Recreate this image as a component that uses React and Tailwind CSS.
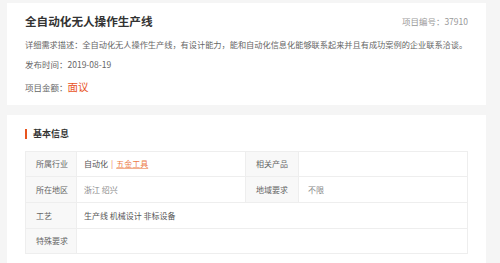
export default function App() {
  const font = { fontFamily: '"Noto Sans CJK SC", "Noto Sans", sans-serif' };
  const label = "pl-[10px] bg-[#f8f8f8] text-[#666] border-r border-[#eeeeee] flex items-center";
  const value = "pl-[7px] flex items-center";
  return (
    <div className="w-[500px] h-[263px] overflow-hidden bg-[#f5f5f5] pt-[3px] pl-[7px]" style={font}>
      <div className="w-[479px] bg-white pt-[8px] pb-[8px] pl-[18px] pr-[18px]">
        <div className="flex items-center justify-between h-[20px]">
          <div className="text-[11.6px] font-bold text-[#333] leading-[20px]">全自动化无人操作生产线</div>
          <div className="text-[8.5px] text-[#999] leading-[20px]">项目编号：37910</div>
        </div>
        <div className="mt-[5px] text-[8.2px] leading-[16px] text-[#666] whitespace-nowrap">
          详细需求描述：全自动化无人操作生产线，有设计能力，能和自动化信息化能够联系起来并且有成功案例的企业联系洽谈。
        </div>
        <div className="mt-[4px] text-[8.5px] leading-[16px] text-[#666]">发布时间：2019-08-19</div>
        <div className="mt-[5px] flex items-center h-[20px] text-[8.5px] text-[#666]">
          <span>项目金额：</span>
          <span className="text-[10.5px] text-[#e8541e]">面议</span>
        </div>
      </div>
      <div className="mt-[10px] w-[479px] h-[200px] bg-white pt-[11px] pl-[18px] pr-[18px]">
        <div className="flex items-center h-[16px]">
          <div className="w-[2px] h-[10px] bg-[#e8541e]"></div>
          <div className="ml-[6px] text-[9px] font-bold text-[#333]">基本信息</div>
        </div>
        <div className="mt-[9px] w-[443px] border border-[#eeeeee] text-[8px] text-[#555]">
          <div className="grid grid-cols-[51px_169px_53px_1fr] h-[25px] border-b border-[#eeeeee]">
            <div className={label}>所属行业</div>
            <div className={value + " border-r border-[#eeeeee]"}>
              <span>自动化</span>
              <span className="text-[#ec7a45] mx-[3px]">|</span>
              <span className="text-[#ec7a45] underline decoration-[#f3b08f]">五金工具</span>
            </div>
            <div className={label}>相关产品</div>
            <div className={value}></div>
          </div>
          <div className="grid grid-cols-[51px_169px_53px_1fr] h-[26px] border-b border-[#eeeeee]">
            <div className={label}>所在地区</div>
            <div className={value + " border-r border-[#eeeeee] text-[#888]"}>浙江 绍兴</div>
            <div className={label}>地域要求</div>
            <div className={value + " pl-[9px] text-[#888]"}>不限</div>
          </div>
          <div className="grid grid-cols-[51px_1fr] h-[26px] border-b border-[#eeeeee]">
            <div className={label}>工艺</div>
            <div className={value}>生产线 机械设计 非标设备</div>
          </div>
          <div className="grid grid-cols-[51px_1fr] h-[24px]">
            <div className={label}>特殊要求</div>
            <div className={value}></div>
          </div>
        </div>
      </div>
    </div>
  );
}
